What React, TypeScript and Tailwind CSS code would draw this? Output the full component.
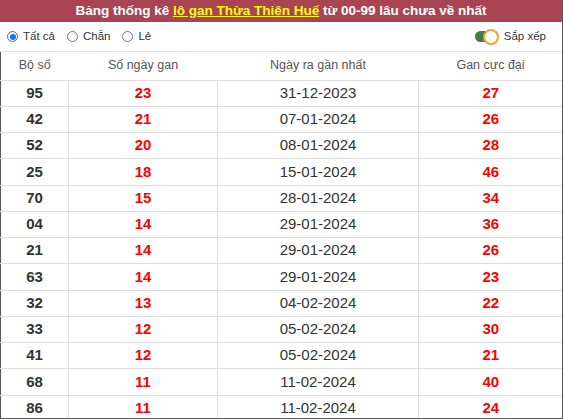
const rows = [
  ["95", "23", "31-12-2023", "27"],
  ["42", "21", "07-01-2024", "26"],
  ["52", "20", "08-01-2024", "28"],
  ["25", "18", "15-01-2024", "46"],
  ["70", "15", "28-01-2024", "34"],
  ["04", "14", "29-01-2024", "36"],
  ["21", "14", "29-01-2024", "26"],
  ["63", "14", "29-01-2024", "23"],
  ["32", "13", "04-02-2024", "22"],
  ["33", "12", "05-02-2024", "30"],
  ["41", "12", "05-02-2024", "21"],
  ["68", "11", "11-02-2024", "40"],
  ["86", "11", "11-02-2024", "24"],
];

const Radio = ({ checked, label }: { checked?: boolean; label: string }) => (
  <label className="flex items-center gap-[5px]">
    <span
      className={
        checked
          ? "flex size-[11px] items-center justify-center rounded-full border border-[#1a73e8] bg-white"
          : "size-[11px] rounded-full border border-[#767676] bg-white"
      }
    >
      {checked && <span className="size-[6px] rounded-full bg-[#1a73e8]" />}
    </span>
    <span>{label}</span>
  </label>
);

export default function App() {
  return (
    <div className="h-[419px] w-[563px] overflow-hidden border-r border-b border-[#555] bg-white font-['Liberation_Sans',Arial,sans-serif] text-[#333]">
      <div className="flex h-[22px] items-center justify-center bg-[#a94452] text-[13.5px] font-bold text-white">
        Bảng thống kê&nbsp;
        <span className="text-[#ffff00] underline">lô gan Thừa Thiên Huế</span>
        &nbsp;từ 00-99 lâu chưa về nhất
      </div>

      <div className="flex h-[30px] items-center justify-between border-b border-[#e5e5e5] pr-[16px] pl-[7px] text-[11.5px]">
        <div className="flex items-center gap-[12px]">
          <Radio checked label="Tất cả" />
          <Radio label="Chẵn" />
          <Radio label="Lẻ" />
        </div>
        <div className="flex items-center">
          <span className="relative flex h-[11px] w-[20px] items-center rounded-full bg-[#4a7c4a]">
            <span className="absolute -right-[4px] size-[16px] rounded-full border-2 border-[#f0a040] bg-white" />
          </span>
          <span className="ml-[9px]">Sắp xếp</span>
        </div>
      </div>

      <table className="w-[562px] table-fixed border-collapse border-l border-[#555] text-center">
        <colgroup>
          <col className="w-[68px]" />
          <col className="w-[149px]" />
          <col className="w-[201px]" />
          <col className="w-[144px]" />
        </colgroup>
        <thead>
          <tr className="h-[28px] border-b border-[#ddd] text-[12.5px] text-[#555]">
            <th className="font-normal">Bộ số</th>
            <th className="font-normal">Số ngày gan</th>
            <th className="font-normal">Ngày ra gần nhất</th>
            <th className="font-normal">Gan cực đại</th>
          </tr>
        </thead>
        <tbody className="text-[15px]">
          {rows.map((r) => (
            <tr key={r[0]} className="h-[26.25px] border-b border-[#ddd]">
              <td className="border-r border-[#ddd] font-bold text-[#333]">{r[0]}</td>
              <td className="border-r border-[#ddd] font-bold text-[#ff0000]">{r[1]}</td>
              <td className="border-r border-[#ddd] text-[#333]">{r[2]}</td>
              <td className="font-bold text-[#ff0000]">{r[3]}</td>
            </tr>
          ))}
        </tbody>
      </table>
    </div>
  );
}
